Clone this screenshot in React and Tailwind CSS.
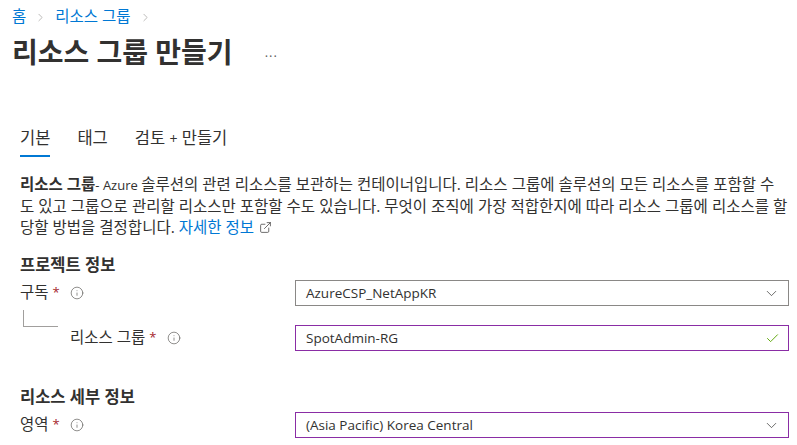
import React from 'react'
import { ChevronRight, ChevronDown, Check, Info, ExternalLink } from 'lucide-react'

const font = "font-['Open_Sans','Noto_Sans_CJK_KR',sans-serif]"

const Label = ({ children, indent }) => (
  <div className={`flex items-center text-[15.5px] ${indent ? 'pl-[50px]' : ''}`}>
    <span>{children}</span>
    <span className="ml-[4px] text-[13px] text-[#a4262c]">*</span>
    <Info className="ml-[10px] h-[14px] w-[14px] text-[#605e5c]" strokeWidth={1.2} />
  </div>
)

const Field = ({ value, valid, purple, select }) => (
  <div
    className={`flex h-[26px] w-[494px] items-center justify-between border pl-[10px] pr-[8px] text-[13.5px] ${
      purple ? 'border-[#8a2da5]' : 'border-[#8a8886]'
    }`}
  >
    <span>{value}</span>
    {select && <ChevronDown className="h-[17px] w-[17px] text-[#323130]" strokeWidth={1} />}
    {valid && <Check className="h-[15px] w-[15px] text-[#57a300]" strokeWidth={1.5} />}
  </div>
)

export default function App() {
  return (
    <div className={`${font} h-[445px] w-[797px] overflow-hidden bg-white text-[15.5px] text-[#323130]`}>
      <div className="px-[12px] pt-[8px]">
        {/* Breadcrumb */}
        <div className="flex h-[18px] items-center gap-[8px] text-[#0078d4]">
          <span>홈</span>
          <ChevronRight className="h-[13px] w-[13px] text-[#a19f9d]" strokeWidth={1.3} />
          <span>리소스 그룹</span>
          <ChevronRight className="h-[13px] w-[13px] text-[#a19f9d]" strokeWidth={1.3} />
        </div>
        <div className="mt-[8px] flex h-[36px] items-center">
          <h1 className="text-[28px] font-bold leading-[36px] text-[#323130]">리소스 그룹 만들기</h1>
          <span className="ml-[32px] mt-[2px] text-[13px] tracking-[1px] text-[#605e5c]">...</span>
        </div>
      </div>

      <div className="pl-[20px] pr-[8px]">
        {/* Tabs */}
        <div className="mt-[58px] flex gap-[27px] text-[16.5px]">
          <div className="flex flex-col">
            <span className="h-[20px] leading-[20px]">기본</span>
            <div className="mt-[7px] h-[2px] bg-[#0078d4]" />
          </div>
          <span className="h-[20px] leading-[20px]">태그</span>
          <span className="h-[20px] leading-[20px]">
            검토 <span className="text-[14px]">+</span> 만들기
          </span>
        </div>

        <p className="mt-[17px] leading-[21px] whitespace-nowrap">
          <span className="font-semibold">리소스 그룹</span>
          <span className="text-[13px]">- Azure </span>솔루션의 관련 리소스를 보관하는 컨테이너입니다. 리소스 그룹에 솔루션의 모든 리소스를 포함할 수
          <br />
          도 있고 그룹으로 관리할 리소스만 포함할 수도 있습니다. 무엇이 조직에 가장 적합한지에 따라 리소스 그룹에 리소스를 할
          <br />
          당할 방법을 결정합니다. <span className="text-[#0078d4]">자세한 정보</span>
          <ExternalLink className="ml-[5px] inline h-[13px] w-[13px] align-[-1px] text-[#323130]" strokeWidth={1.3} />
        </p>

        <h2 className="mt-[17px] h-[20px] text-[16.5px] font-semibold leading-[20px]">프로젝트 정보</h2>

        <div className="mt-[5px] flex items-center justify-between">
          <Label>구독</Label>
          <Field value="AzureCSP_NetAppKR" select />
        </div>

        <div className="relative mt-[19px] flex items-center justify-between">
          <div className="absolute left-[3px] top-[-15px] h-[17px] w-[35px] border-b border-l border-[#a19f9d]" />
          <Label indent>리소스 그룹</Label>
          <Field value="SpotAdmin-RG" valid purple />
        </div>

        <h2 className="mt-[36px] h-[20px] text-[16.5px] font-semibold leading-[20px]">리소스 세부 정보</h2>

        <div className="mt-[5px] flex items-center justify-between">
          <Label>영역</Label>
          <Field value="(Asia Pacific) Korea Central" select purple />
        </div>
      </div>
    </div>
  )
}
